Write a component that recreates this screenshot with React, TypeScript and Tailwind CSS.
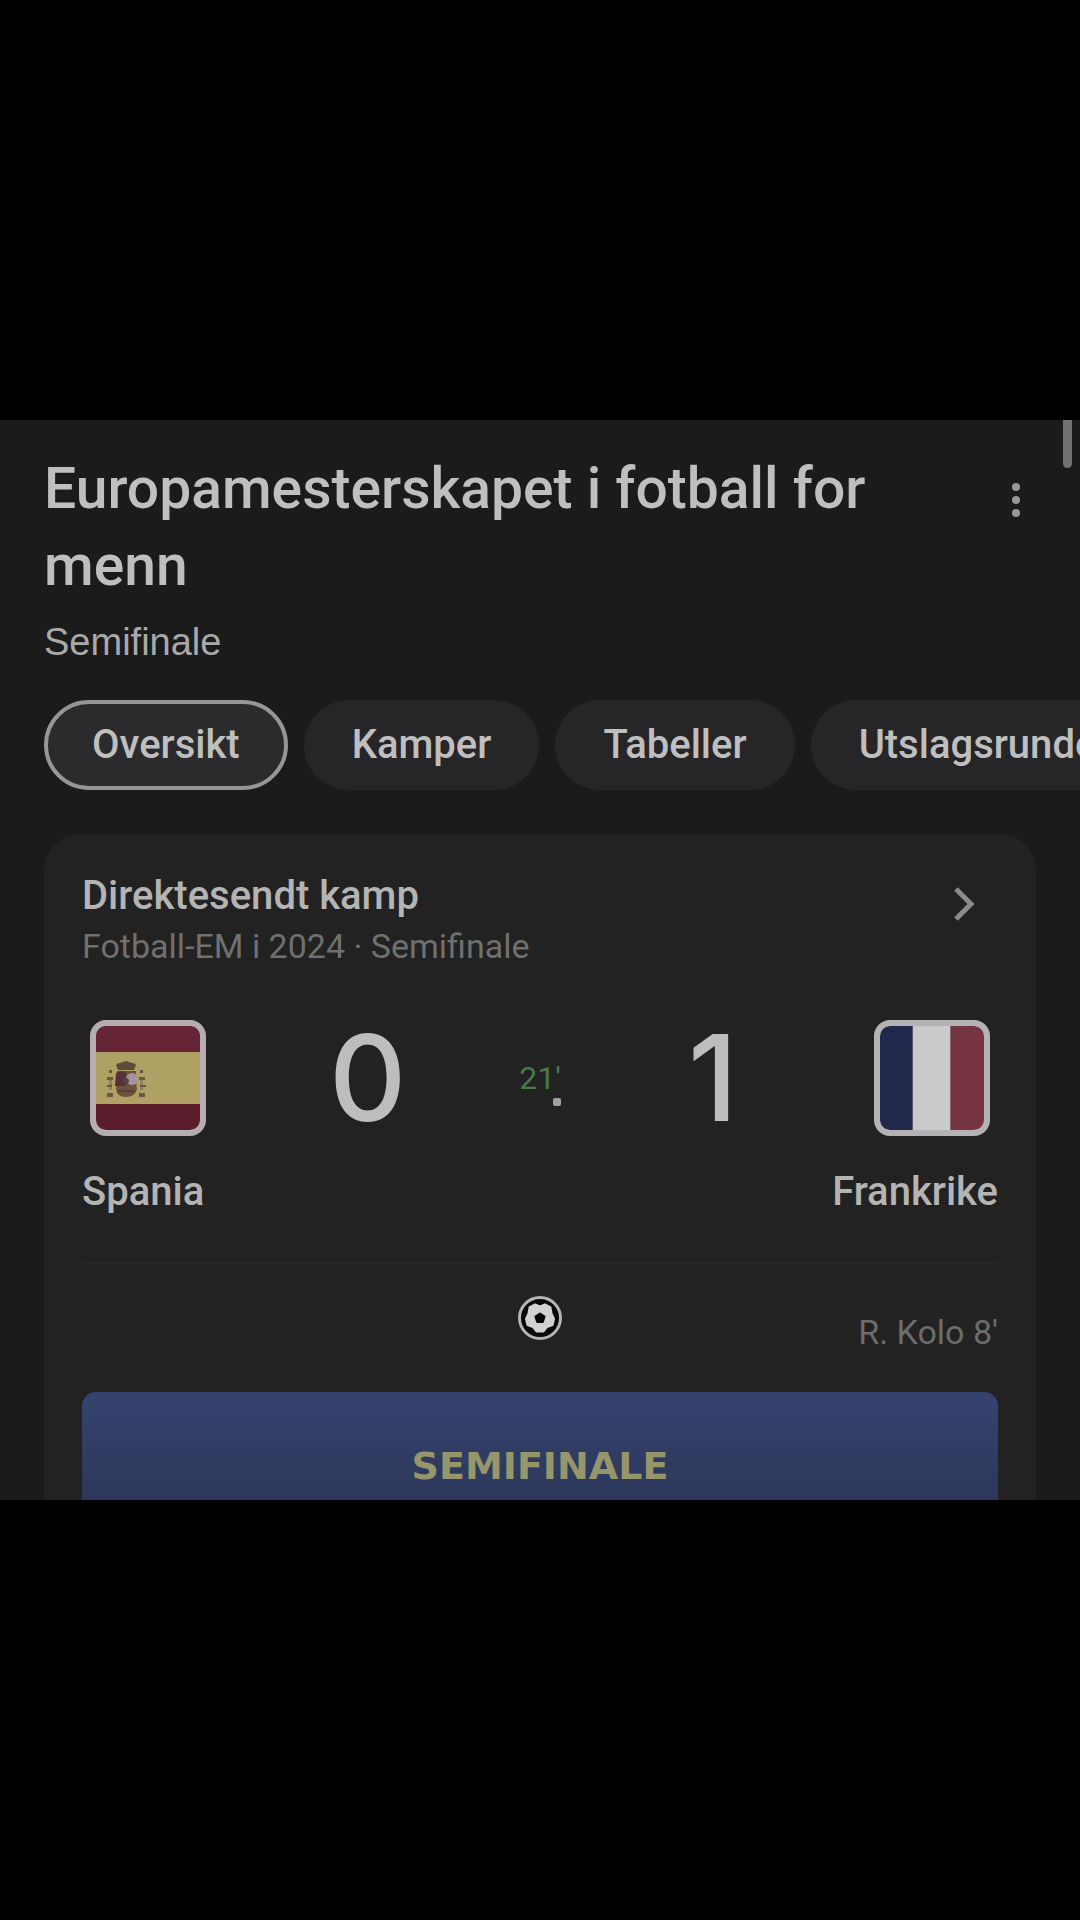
import { useState } from "react";

const tabs = ["Oversikt", "Kamper", "Tabeller", "Utslagsrunder"];

function MoreIcon() {
  return (
    <svg viewBox="0 0 16 36" className="h-9 w-4 fill-[#969696]" aria-hidden="true">
      <circle cx="8" cy="5" r="4" />
      <circle cx="8" cy="18" r="4" />
      <circle cx="8" cy="31" r="4" />
    </svg>
  );
}

function ChevronIcon() {
  return (
    <svg viewBox="0 0 24 36" className="h-9 w-6 fill-none stroke-[#8b8b8b]" strokeWidth="5" aria-hidden="true">
      <path d="M4 3 L19 18 L4 33" />
    </svg>
  );
}

function SpainFlag() {
  return (
    <svg viewBox="0 0 104 104" preserveAspectRatio="none" className="h-full w-full" role="img" aria-label="Spania">
      <rect width="104" height="104" fill="#5b1c2b" />
      <rect width="104" height="26" fill="#662437" />
      <rect y="26" width="104" height="52" fill="#afa164" />
      <g fill="#6d5544">
        <path d="M20 39 q1 -2 4 -2 l6 -2 6 2 q3 0 4 2 l-2 5 h-16 z" fill="#5f4a38" />
        <rect x="13" y="44" width="3" height="3" />
        <rect x="11" y="51" width="6" height="3" />
        <rect x="13" y="54" width="3" height="10" fill="#8d7f6c" />
        <rect x="11" y="59" width="5" height="2" />
        <rect x="11" y="67" width="6" height="4" />
        <rect x="44" y="44" width="3" height="3" />
        <rect x="43" y="51" width="6" height="3" />
        <rect x="44" y="54" width="3" height="10" fill="#8d7f6c" />
        <rect x="44" y="59" width="6" height="2" />
        <rect x="43" y="67" width="6" height="4" />
      </g>
      <path d="M21 45 h19 v10 l1 8 q-2 8 -11 8 q-9 0 -10 -8 z" fill="#6f5140" />
      <path d="M20 47 q5 -3 10 -1 v14 h-11 z" fill="#573036" />
      <circle cx="36" cy="53" r="6" fill="#a3939b" />
      <circle cx="30" cy="55" r="3" fill="#5a3f52" />
      <rect x="22" y="64" width="17" height="2" fill="#57402f" />
    </svg>
  );
}

function FranceFlag() {
  return (
    <svg viewBox="0 0 105 104" preserveAspectRatio="none" className="h-full w-full" role="img" aria-label="Frankrike">
      <rect width="105" height="104" fill="#cacaca" />
      <rect width="33" height="104" fill="#22284c" />
      <rect x="71" width="34" height="104" fill="#743442" />
    </svg>
  );
}

function BallIcon() {
  return (
    <svg viewBox="0 0 44 44" className="h-11 w-11" role="img" aria-label="Mål">
      <circle cx="22" cy="22" r="20.5" fill="#080808" stroke="#b4b4b4" strokeWidth="3" />
      <path
        d="M22 10.5 L27 8.5 L32.5 11.5 L33.5 17.5 L36 23 L34.5 29 L29 31 L25.5 35.5 L18.5 35.5 L15 31 L9.5 29 L8 23 L10.5 17.5 L11.5 11.5 L17 8.5 Z"
        fill="#d2d2d2"
        stroke="#d2d2d2"
        strokeWidth="2"
        strokeLinejoin="round"
      />
      <path
        d="M22 17.5 L26.5 20.6 L24.8 26 L19.2 26 L17.5 20.6 Z"
        fill="#060606"
        stroke="#060606"
        strokeWidth="2"
        strokeLinejoin="round"
      />
    </svg>
  );
}

export default function App() {
  const [activeTab, setActiveTab] = useState("Oversikt");

  return (
    <main className="flex min-h-screen flex-col justify-center bg-black font-['Roboto',sans-serif] text-[#bfbfbf]">
      <div className="relative aspect-square w-full overflow-hidden bg-[#1b1b1b]">
        <div className="absolute top-0 right-2 h-12 w-[9px] rounded-b-full bg-[#727272]" />

        <header className="flex items-start justify-between px-11 pt-[30px]">
          <div>
            <h1 className="max-w-[860px] text-[57px] leading-[77px] font-medium">
              Europamesterskapet i fotball for menn
            </h1>
            <p className="mt-3 font-['Liberation_Sans',Arial,sans-serif] text-[38px] leading-[52px] text-[#a9a9a9]">
              Semifinale
            </p>
          </div>
          <button type="button" aria-label="Flere valg" className="mt-8 flex w-10 justify-center">
            <MoreIcon />
          </button>
        </header>

        <nav className="mt-8 flex gap-4 overflow-hidden pl-11">
          {tabs.map((tab) => (
            <button
              key={tab}
              type="button"
              onClick={() => setActiveTab(tab)}
              className={`h-[90px] shrink-0 rounded-full border-4 px-11 text-[40px] leading-[52px] font-medium ${
                tab === activeTab ? "border-[#969696] bg-[#2b2b2d]" : "border-transparent bg-[#262628]"
              }`}
            >
              {tab}
            </button>
          ))}
        </nav>

        <section className="mx-11 mt-11 rounded-t-[36px] bg-[#222222] px-[38px] pt-9 pb-10">
          <div className="flex items-start justify-between">
            <div>
              <h2 className="text-[40px] leading-[52px] font-medium text-[#b4b4b4]">Direktesendt kamp</h2>
              <p className="text-[34px] leading-[48px] text-[#707070]">Fotball-EM i 2024 · Semifinale</p>
            </div>
            <button type="button" aria-label="Vis kampen" className="flex size-[68px] items-center justify-center">
              <ChevronIcon />
            </button>
          </div>

          <div className="mt-[50px] flex items-center px-2">
            <div className="size-[116px] shrink-0 overflow-hidden rounded-[16px] border-6 border-[#b5adb0] bg-[#b5adb0]">
              <div className="size-full overflow-hidden rounded-[9px]">
                <SpainFlag />
              </div>
            </div>
            <div className="flex flex-1 items-center justify-between px-[123px] font-['Inter',sans-serif] text-[120px] leading-[116px] font-medium text-[#bdbdbd]">
              <span className="w-[76px] text-center">0</span>
              <span className="relative font-['Roboto',sans-serif] text-[32px] leading-[52px] font-normal text-[#48794e]">
                21'
                <span className="absolute right-0 -bottom-0.5 size-2 rounded-xs bg-[#a3a3a3]" />
              </span>
              <span className="w-[76px] text-center">1</span>
            </div>
            <div className="size-[116px] shrink-0 overflow-hidden rounded-[16px] border-6 border-[#b5b2b6] bg-[#b5b2b6]">
              <div className="size-full overflow-hidden rounded-[9px]">
                <FranceFlag />
              </div>
            </div>
          </div>

          <div className="mt-[30px] flex justify-between text-[40px] leading-[52px] font-medium text-[#b4b4b4]">
            <span>Spania</span>
            <span>Frankrike</span>
          </div>

          <div className="mt-11 grid grid-cols-[1fr_auto_1fr] items-start border-t-2 border-[#272727] pt-8">
            <span />
            <BallIcon />
            <span className="pt-3 text-right text-[34px] leading-[48px] text-[#6c6c6c]">R. Kolo 8'</span>
          </div>

          <div className="mt-9 rounded-t-[14px] bg-linear-to-b from-[#35436f] to-[#2b3354] pt-12 pb-12 text-center">
            <p className="font-['DejaVu_Sans',sans-serif] text-[38px] leading-[52px] font-bold text-[#97956a]">
              SEMIFINALE
            </p>
          </div>
        </section>
      </div>
    </main>
  );
}
